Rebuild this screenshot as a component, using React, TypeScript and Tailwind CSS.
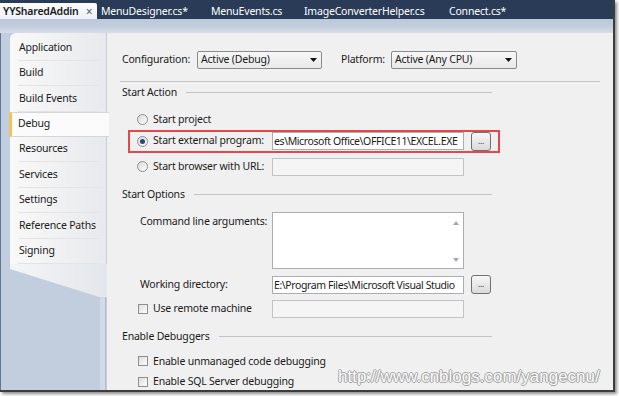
import type { ReactNode } from "react";

const navItems = [
  "Application",
  "Build",
  "Build Events",
  "Debug",
  "Resources",
  "Services",
  "Settings",
  "Reference Paths",
  "Signing",
];

const tabs = [
  { label: "MenuDesigner.cs*", className: "w-[110px]" },
  { label: "MenuEvents.cs", className: "w-[93px]" },
  { label: "ImageConverterHelper.cs", className: "w-[145px]" },
  { label: "Connect.cs*", className: "w-[80px]" },
];

function Radio({ checked }: { checked?: boolean }) {
  return (
    <span className="flex h-[11px] w-[11px] shrink-0 items-center justify-center rounded-full border border-[#8e8f8f] bg-linear-to-br from-[#d9d9d9] to-[#ffffff]">
      {checked ? <span className="h-[5px] w-[5px] rounded-full bg-[#27477a]" /> : null}
    </span>
  );
}

function Check() {
  return (
    <span className="h-[10px] w-[10px] shrink-0 border border-[#8e8f8f] bg-linear-to-br from-[#dcdcdc] to-[#ffffff]" />
  );
}

function Field({ value, disabled }: { value?: string; disabled?: boolean }) {
  return (
    <div
      className={
        disabled
          ? "h-[18px] w-[192px] border border-[#c3c3c3] bg-[#f5f5f5]"
          : "h-[18px] w-[192px] overflow-hidden whitespace-nowrap border border-[#abadb3] bg-white pl-[1px] leading-[16px] tracking-[-0.4px]"
      }
    >
      {value}
    </div>
  );
}

function Browse() {
  return (
    <div className="ml-[7px] flex h-[19px] w-[20px] items-end justify-center rounded-[3px] border border-[#707070] bg-linear-to-b from-[#f6f6f6] to-[#dadada] pb-[5px] text-[8px] leading-none">
      ...
    </div>
  );
}

function Select({ value, className }: { value: string; className: string }) {
  return (
    <div
      className={`flex h-[18px] items-center justify-between rounded-[2px] border border-[#8a8a8a] bg-linear-to-b from-[#f7f7f7] to-[#e9e9e9] pl-[3px] pr-[4px] ${className}`}
    >
      <span>{value}</span>
      <svg width="7" height="4" viewBox="0 0 7 4">
        <path d="M0 0h7L3.5 4z" fill="#111" />
      </svg>
    </div>
  );
}

function Section({ title, className }: { title: string; className: string }) {
  return (
    <div className={`ml-[2px] flex h-[14px] w-[370px] items-center ${className}`}>
      <span>{title}</span>
      <span className="ml-[9px] h-px flex-1 bg-[#c4c4c4]" />
    </div>
  );
}

function Row({ className, children }: { className: string; children: ReactNode }) {
  return <div className={`flex items-center ${className}`}>{children}</div>;
}

export default function App() {
  return (
    <div className="h-[396px] w-[619px] overflow-hidden bg-white font-['Noto_Sans',sans-serif] text-[10.5px] tracking-[-0.2px] text-[#1b1b1b]">
      <div className="flex h-[392px] w-[615px] flex-col border-b-2 border-r-2 border-[#3d3d3d] shadow-[2px_2px_3px_rgba(0,0,0,0.45)]">
        {/* document tabs */}
        <div className="flex h-[19px] shrink-0 items-end bg-[#2a3b58] text-white">
          <div className="flex h-[16px] w-[97px] items-center rounded-tr-[2px] bg-linear-to-b from-[#fcfdfe] to-[#edf0f5] pl-[3px] pt-[1px] font-semibold text-[#1b1b1b]">
            YYSharedAddin
            <span className="ml-[7px] text-[12px] font-normal text-[#606060]">×</span>
          </div>
          <div className="ml-[4px] flex items-end">
            {tabs.map((tab) => (
              <div key={tab.label} className={`flex h-[16px] items-center pt-[1px] ${tab.className}`}>
                {tab.label}
              </div>
            ))}
          </div>
        </div>
        <div className="h-[14px] shrink-0 bg-linear-to-b from-[#bcc8d9] via-[#c2cddc] to-[#d8dee8]" />

        <div className="flex min-h-0 flex-1">
          {/* property page list */}
          <nav className="flex w-[107px] shrink-0 flex-col border-l border-[#5f7597] bg-[#c2cedd]">
            <div className="ml-[9px] rounded-tl-[6px] border-r border-[#c6cdd7] bg-linear-to-r from-[#f9f9f9] to-[#e8e9ec] pt-[2.5px]">
              {navItems.map((item) =>
                item === "Debug" ? (
                  <div
                    key={item}
                    className="relative z-10 -ml-[1px] -mr-[3px] flex h-[25.4px] items-center border-y border-l-[3px] border-[#d6d6d6] border-l-[#f2c35c] bg-[#fbfbfb] pl-[6px]"
                  >
                    {item}
                  </div>
                ) : (
                  <div key={item} className="h-[25.4px] pl-[8px] pr-[6px]">
                    <div className="flex h-full items-center border-b border-[#e4e4e4] pl-[1px]">{item}</div>
                  </div>
                ),
              )}
            </div>
            <div className="ml-[9px] h-[33px] shrink-0 bg-linear-to-r from-[#f4f5f6] to-[#e3e6eb] [clip-path:polygon(0_0,100%_0,100%_100%,92%_100%,0_15%)]" />
            <div className="ml-auto mr-[1px] w-[6px] flex-1 rounded-tl-[2px] border-r border-[#b4bfcd] bg-[#d2dae5]" />
          </nav>

          {/* debug page */}
          <main className="relative flex min-w-0 flex-1 flex-col overflow-hidden bg-[#f0f0f0] pl-[13px] pt-[18px]">
            <Row className="ml-[2px] h-[18px]">
              <span className="w-[75px]">Configuration:</span>
              <Select value="Active (Debug)" className="w-[125px]" />
              <span className="ml-[19px] w-[50px]">Platform:</span>
              <Select value="Active (Any CPU)" className="w-[126px]" />
            </Row>
            <div className="mt-[12px] h-px w-[480px] bg-[#c4c4c4]" />

            <Section title="Start Action" className="mt-[4px]" />
            <Row className="ml-[17px] mt-[12px] h-[18px] gap-[5px]">
              <Radio />
              <span>Start project</span>
            </Row>
            <Row className="ml-[8px] mt-[2px] h-[23px] w-[372px] border-2 border-[#e54848] pl-[7px]">
              <Radio checked />
              <span className="ml-[5px] w-[119px]">Start external program:</span>
              <Field value="es\Microsoft Office\OFFICE11\EXCEL.EXE" />
              <Browse />
            </Row>
            <Row className="ml-[17px] mt-[5px] h-[18px]">
              <Radio />
              <span className="ml-[5px] w-[119px]">Start browser with URL:</span>
              <Field disabled />
            </Row>

            <Section title="Start Options" className="mt-[12px]" />
            <div className="ml-[20px] mt-[10px] flex">
              <span className="mt-[2px] w-[132px] leading-[14px]">Command line arguments:</span>
              <div className="relative h-[57px] w-[192px] border border-[#abadb3] bg-white">
                <svg className="absolute right-[4px] top-[8px]" width="6" height="4" viewBox="0 0 6 4">
                  <path d="M3 0l3 4H0z" fill="#a8a8a8" />
                </svg>
                <svg className="absolute bottom-[6px] right-[4px]" width="6" height="4" viewBox="0 0 6 4">
                  <path d="M0 0h6L3 4z" fill="#a8a8a8" />
                </svg>
              </div>
            </div>
            <Row className="ml-[20px] mt-[7px] h-[18px]">
              <span className="w-[132px]">Working directory:</span>
              <Field value="E:\Program Files\Microsoft Visual Studio" />
              <Browse />
            </Row>
            <Row className="ml-[18px] mt-[6px] h-[18px]">
              <Check />
              <span className="ml-[5px] w-[119px]">Use remote machine</span>
              <Field disabled />
            </Row>

            <Section title="Enable Debuggers" className="mt-[12px]" />
            <Row className="ml-[18px] mt-[10px] h-[16px] gap-[5px]">
              <Check />
              <span>Enable unmanaged code debugging</span>
            </Row>
            <Row className="ml-[18px] mt-[5px] h-[16px] gap-[5px]">
              <Check />
              <span>Enable SQL Server debugging</span>
            </Row>

            <div className="absolute left-[231px] top-[334px] font-['Liberation_Sans',sans-serif] text-[17px] leading-[20px] tracking-normal text-[#fbfbfb] [text-shadow:1px_0_#a3a3a3,-1px_0_#a3a3a3,0_1px_#a3a3a3,0_-1px_#a3a3a3]">
              http://www.cnblogs.com/yangecnu/
            </div>
          </main>
        </div>
      </div>
    </div>
  );
}
